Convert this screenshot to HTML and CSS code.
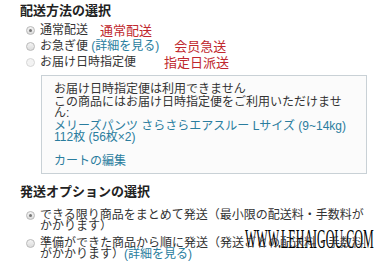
FILE: index.html
```html
<!DOCTYPE html>
<html lang="ja">
<head>
    <meta charset="UTF-8">
    <title>配送方法の選択</title>
    <link rel="stylesheet" href="styles.css">
</head>
<body>
    <div class="page">
        <h2 class="section-title">配送方法の選択</h2>
        <ul class="options">
            <li class="option">
                <span class="radio checked"></span>
                <span>通常配送</span>
                <span class="note">通常配送</span>
            </li>
            <li class="option">
                <span class="radio"></span>
                <span>お急ぎ便 <a href="#">(詳細を見る)</a></span>
                <span class="note note-mid">会员急送</span>
            </li>
            <li class="option">
                <span class="radio disabled"></span>
                <span>お届け日時指定便</span>
                <span class="note note-far">指定日派送</span>
            </li>
        </ul>

        <div class="notice">
            <p class="first">お届け日時指定便は利用できません</p>
            <p>この商品にはお届け日時指定便をご利用いただけません:</p>
            <p class="item"><a href="#">メリーズパンツ さらさらエアスルー Lサイズ (9~14kg)<br>112枚 (56枚×2)</a></p>
            <p class="edit"><a href="#">カートの編集</a></p>
        </div>

        <h2 class="section-title second">発送オプションの選択</h2>
        <ul class="options wrap">
            <li class="option">
                <span class="radio checked"></span>
                <span class="label">できる限り商品をまとめて発送（最小限の配送料・手数料がかかります）</span>
            </li>
            <li class="option">
                <span class="radio"></span>
                <span class="label">準備ができた商品から順に発送（発送ごとの配送料・手数料がかかります）<a href="#">(詳細を見る)</a></span>
            </li>
        </ul>

        <div class="watermark">WWW.LEHAIGOU.COM</div>
    </div>
</body>
</html>
```

FILE: styles.css
```css
* {
    margin: 0;
    padding: 0;
    box-sizing: border-box;
}

body {
    background: #fff;
    color: #333;
    font-family: "Liberation Sans", "Noto Sans CJK JP", sans-serif;
    font-size: 12px;
}

.page {
    position: relative;
    width: 383px;
    height: 269px;
    padding: 2px 0 0 20px;
    overflow: hidden;
}

a {
    color: #2a7d9e;
    text-decoration: none;
}

.section-title {
    font-family: "Noto Sans CJK JP", sans-serif;
    font-size: 13px;
    font-weight: bold;
    color: #222;
    line-height: 16px;
    margin-bottom: 4px;
}

.section-title.second {
    margin-top: 9px;
    margin-bottom: 11px;
}

.options {
    list-style: none;
}

.option {
    display: flex;
    align-items: center;
    height: 16px;
    line-height: 16px;
}

.radio {
    flex: none;
    width: 9px;
    height: 9px;
    margin: 0 5px 0 6px;
    border: 1px solid #b9b9b9;
    border-radius: 50%;
    background: linear-gradient(#f4f4f4, #dcdcdc);
    position: relative;
}

.radio.checked::after {
    content: "";
    position: absolute;
    left: 2px;
    top: 2px;
    width: 3px;
    height: 3px;
    border-radius: 50%;
    background: #777;
}

.radio.disabled {
    border-color: #d6d6d6;
    background: #f3f3f3;
}

.note {
    font-family: "Noto Sans CJK SC", sans-serif;
    font-size: 13px;
    color: #c0272d;
    margin-left: 12px;
}

.note-mid {
    margin-left: 15px;
}

.note-far {
    margin-left: 28px;
}

.notice {
    margin: 5px 0 0 21px;
    width: 326px;
    height: 99px;
    padding: 8px 20px 0 12px;
    border: 1px solid #c9d1d6;
    background: #fbfbfb;
    line-height: 11px;
}

.notice p {
    margin-top: 2px;
}

.notice p.first {
    margin-top: 0;
}

.notice .item {
    white-space: nowrap;
}

.notice .edit {
    margin-top: 13px;
}

.wrap .option {
    align-items: flex-start;
    height: auto;
    line-height: 11px;
    margin-bottom: 6px;
}

.wrap .radio {
    margin-top: 1px;
}

.wrap .label {
    width: 330px;
}

.watermark {
    position: absolute;
    left: 245px;
    top: 225px;
    font-family: "Liberation Serif", serif;
    font-size: 28px;
    line-height: 28px;
    color: #000;
    white-space: nowrap;
    transform: scaleX(0.43);
    transform-origin: left top;
    text-shadow: 0 0 2px #fff;
}
```
